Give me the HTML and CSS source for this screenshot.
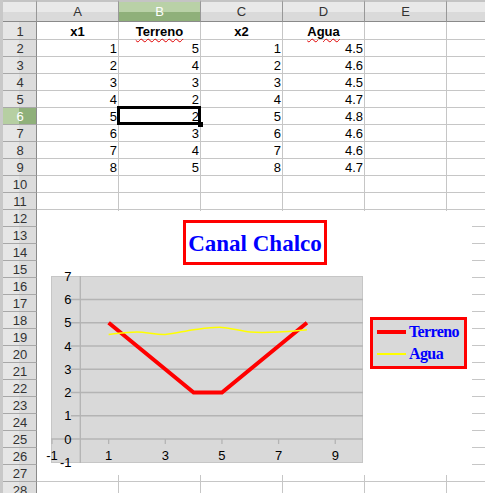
FILE: index.html
```html
<!DOCTYPE html>
<html lang="es">
<head>
    <meta charset="UTF-8">
    <title>Canal Chalco - Hoja1</title>
    <link rel="stylesheet" href="styles.css">
</head>
<body>

<div class="sheet">
    <div class="row head">
        <div class="corner"></div>
        <div class="col">A</div>
        <div class="col active">B</div>
        <div class="col">C</div>
        <div class="col">D</div>
        <div class="col">E</div>
        <div class="col"></div>
    </div>
    <div class="row first">
        <div class="num">1</div>
        <div class="cell label">x1</div>
        <div class="cell label"><span class="typo">Terreno</span></div>
        <div class="cell label">x2</div>
        <div class="cell label"><span class="typo">Agua</span></div>
        <div class="cell"></div>
        <div class="cell"></div>
    </div>
    <div class="row"><div class="num">2</div><div class="cell">1</div><div class="cell">5</div><div class="cell">1</div><div class="cell">4.5</div><div class="cell"></div><div class="cell"></div></div>
    <div class="row"><div class="num">3</div><div class="cell">2</div><div class="cell">4</div><div class="cell">2</div><div class="cell">4.6</div><div class="cell"></div><div class="cell"></div></div>
    <div class="row"><div class="num">4</div><div class="cell">3</div><div class="cell">3</div><div class="cell">3</div><div class="cell">4.5</div><div class="cell"></div><div class="cell"></div></div>
    <div class="row"><div class="num">5</div><div class="cell">4</div><div class="cell">2</div><div class="cell">4</div><div class="cell">4.7</div><div class="cell"></div><div class="cell"></div></div>
    <div class="row"><div class="num active">6</div><div class="cell">5</div><div class="cell cursor">2</div><div class="cell">5</div><div class="cell">4.8</div><div class="cell"></div><div class="cell"></div></div>
    <div class="row"><div class="num">7</div><div class="cell">6</div><div class="cell">3</div><div class="cell">6</div><div class="cell">4.6</div><div class="cell"></div><div class="cell"></div></div>
    <div class="row"><div class="num">8</div><div class="cell">7</div><div class="cell">4</div><div class="cell">7</div><div class="cell">4.6</div><div class="cell"></div><div class="cell"></div></div>
    <div class="row"><div class="num">9</div><div class="cell">8</div><div class="cell">5</div><div class="cell">8</div><div class="cell">4.7</div><div class="cell"></div><div class="cell"></div></div>
    <div class="row"><div class="num">10</div><div class="cell"></div><div class="cell"></div><div class="cell"></div><div class="cell"></div><div class="cell"></div><div class="cell"></div></div>
    <div class="row"><div class="num">11</div><div class="cell"></div><div class="cell"></div><div class="cell"></div><div class="cell"></div><div class="cell"></div><div class="cell"></div></div>
    <div class="row"><div class="num">12</div><div class="cell"></div><div class="cell"></div><div class="cell"></div><div class="cell"></div><div class="cell"></div><div class="cell"></div></div>
    <div class="row"><div class="num">13</div><div class="cell"></div><div class="cell"></div><div class="cell"></div><div class="cell"></div><div class="cell"></div><div class="cell"></div></div>
    <div class="row"><div class="num">14</div><div class="cell"></div><div class="cell"></div><div class="cell"></div><div class="cell"></div><div class="cell"></div><div class="cell"></div></div>
    <div class="row"><div class="num">15</div><div class="cell"></div><div class="cell"></div><div class="cell"></div><div class="cell"></div><div class="cell"></div><div class="cell"></div></div>
    <div class="row"><div class="num">16</div><div class="cell"></div><div class="cell"></div><div class="cell"></div><div class="cell"></div><div class="cell"></div><div class="cell"></div></div>
    <div class="row"><div class="num">17</div><div class="cell"></div><div class="cell"></div><div class="cell"></div><div class="cell"></div><div class="cell"></div><div class="cell"></div></div>
    <div class="row"><div class="num">18</div><div class="cell"></div><div class="cell"></div><div class="cell"></div><div class="cell"></div><div class="cell"></div><div class="cell"></div></div>
    <div class="row"><div class="num">19</div><div class="cell"></div><div class="cell"></div><div class="cell"></div><div class="cell"></div><div class="cell"></div><div class="cell"></div></div>
    <div class="row"><div class="num">20</div><div class="cell"></div><div class="cell"></div><div class="cell"></div><div class="cell"></div><div class="cell"></div><div class="cell"></div></div>
    <div class="row"><div class="num">21</div><div class="cell"></div><div class="cell"></div><div class="cell"></div><div class="cell"></div><div class="cell"></div><div class="cell"></div></div>
    <div class="row"><div class="num">22</div><div class="cell"></div><div class="cell"></div><div class="cell"></div><div class="cell"></div><div class="cell"></div><div class="cell"></div></div>
    <div class="row"><div class="num">23</div><div class="cell"></div><div class="cell"></div><div class="cell"></div><div class="cell"></div><div class="cell"></div><div class="cell"></div></div>
    <div class="row"><div class="num">24</div><div class="cell"></div><div class="cell"></div><div class="cell"></div><div class="cell"></div><div class="cell"></div><div class="cell"></div></div>
    <div class="row"><div class="num">25</div><div class="cell"></div><div class="cell"></div><div class="cell"></div><div class="cell"></div><div class="cell"></div><div class="cell"></div></div>
    <div class="row"><div class="num">26</div><div class="cell"></div><div class="cell"></div><div class="cell"></div><div class="cell"></div><div class="cell"></div><div class="cell"></div></div>
    <div class="row"><div class="num">27</div><div class="cell"></div><div class="cell"></div><div class="cell"></div><div class="cell"></div><div class="cell"></div><div class="cell"></div></div>
    <div class="row"><div class="num">28</div><div class="cell"></div><div class="cell"></div><div class="cell"></div><div class="cell"></div><div class="cell"></div><div class="cell"></div></div>

    <!-- chart object floating over rows 12-27 -->
    <div class="chart">
        <svg class="plot" width="435" height="264" viewBox="0 0 435 264">
            <rect class="wall" x="14.5" y="65.5" width="311" height="186"/>
            <g class="grid">
                <line x1="34" y1="204.75" x2="326" y2="204.75"/>
                <line x1="34" y1="181.5" x2="326" y2="181.5"/>
                <line x1="34" y1="158.25" x2="326" y2="158.25"/>
                <line x1="34" y1="135" x2="326" y2="135"/>
                <line x1="34" y1="111.75" x2="326" y2="111.75"/>
                <line x1="34" y1="88.5" x2="326" y2="88.5"/>
                <line x1="14" y1="228" x2="326" y2="228"/>
                <line x1="43.3" y1="65" x2="43.3" y2="252"/>
            </g>
            <g class="ticks">
                <line x1="14.97" y1="228" x2="14.97" y2="233"/>
                <line x1="71.63" y1="228" x2="71.63" y2="233"/>
                <line x1="128.29" y1="228" x2="128.29" y2="233"/>
                <line x1="184.95" y1="228" x2="184.95" y2="233"/>
                <line x1="241.61" y1="228" x2="241.61" y2="233"/>
                <line x1="298.27" y1="228" x2="298.27" y2="233"/>
            </g>
            <g class="axis-label y-labels">
                <text x="34.5" y="69.95">7</text>
                <text x="34.5" y="93.2">6</text>
                <text x="34.5" y="116.45">5</text>
                <text x="34.5" y="139.7">4</text>
                <text x="34.5" y="162.95">3</text>
                <text x="34.5" y="186.2">2</text>
                <text x="34.5" y="209.45">1</text>
                <text x="34.5" y="232.7">0</text>
                <text x="34.5" y="255.95">-1</text>
            </g>
            <g class="axis-label x-labels">
                <text x="14.97" y="249">-1</text>
                <text x="71.63" y="249">1</text>
                <text x="128.29" y="249">3</text>
                <text x="184.95" y="249">5</text>
                <text x="241.61" y="249">7</text>
                <text x="298.27" y="249">9</text>
            </g>
            <polyline class="terreno" points="71.63,111.75 99.96,135 128.29,158.25 156.62,181.5 184.95,181.5 213.28,158.25 241.61,135 269.94,111.75"/>
            <path class="agua" d="M71.63 123.4 C76.35 123.01 90.52 121.05 99.96 121.05 C109.4 121.05 118.85 123.79 128.29 123.4 C137.73 123.01 147.18 119.87 156.62 118.7 C166.06 117.53 175.51 116.01 184.95 116.4 C194.39 116.79 203.84 120.27 213.28 121.05 C222.72 121.83 232.17 121.44 241.61 121.05 C251.05 120.66 265.22 119.09 269.94 118.7"/>
        </svg>

        <div class="chart-title">Canal Chalco</div>

        <div class="legend">
            <div class="legend-item"><span class="swatch"></span>Terreno</div>
            <div class="legend-item"><span class="swatch agua"></span>Agua</div>
        </div>
    </div>
</div>

</body>
</html>
```

FILE: styles.css
```css
/* spreadsheet view with an embedded line chart */
html, body {
    margin: 0;
    padding: 0;
    overflow: hidden;
    background-color: #fff;
}
body {
    font-family: "Liberation Sans", Arial, sans-serif;
    font-size: 13px;
    color: #000;
}
.sheet {
    position: relative;
    border-left: 3px solid #c8c8c8;
}
.row {
    display: grid;
    grid-template-columns: 34px repeat(5, 82px) 1fr;
    height: 17px;
}
.row.head {
    height: 22px;
}
.row.first {
    height: 18px;
}
.row > div {
    box-sizing: border-box;
}
.row > div:last-child {
    border-right: 0;
}

/* column and row headers */
.corner, .col {
    border-top: 2px solid #c4c4c4;
    border-right: 1px solid #989898;
    border-bottom: 1px solid #8a8a8a;
    background: linear-gradient(#e9e9e9 55%, #dadada 55%);
    color: #333;
    text-align: center;
    line-height: 18px;
    padding-top: 1px;
}
.col.active {
    background: linear-gradient(#b9d1a7 55%, #8fb07a 55%);
    color: #fff;
}
.num {
    border-right: 1px solid #8a8a8a;
    border-bottom: 1px solid #a8a8a8;
    background: linear-gradient(to right, #e6e6e6 50%, #dcdcdc 50%);
    color: #333;
    display: flex;
    align-items: flex-end;
    justify-content: center;
    line-height: 14px;
    padding-left: 1px;
}
.num.active {
    background: linear-gradient(to right, #b6cfa2 50%, #8fb07a 50%);
    color: #fff;
}

/* cells */
.cell {
    border-right: 1px solid #c6c6c6;
    border-bottom: 1px solid #c6c6c6;
    display: flex;
    align-items: flex-end;
    justify-content: flex-end;
    line-height: 14px;
    padding-right: 1px;
    white-space: nowrap;
}
.cell.label {
    justify-content: center;
    font-weight: bold;
    padding-right: 0;
}
.typo {
    text-decoration: underline wavy #e00000;
    text-decoration-thickness: 1px;
    text-underline-offset: 2px;
}
.cell.cursor {
    position: relative;
}
.cell.cursor::after {
    content: "";
    position: absolute;
    top: -2px;
    left: -2px;
    right: -1px;
    bottom: -1px;
    border: 3px solid #000;
}
.cell.cursor::before {
    content: "";
    position: absolute;
    right: -3px;
    bottom: -3px;
    width: 5px;
    height: 5px;
    background-color: #000;
    z-index: 1;
}

/* chart */
.chart {
    position: absolute;
    left: 34px;
    top: 211px;
    width: 435px;
    height: 264px;
    background-color: #fff;
}
.plot {
    display: block;
}
.wall {
    fill: #d9d9d9;
    stroke: #c6c6c6;
    stroke-width: 1;
}
.grid line {
    stroke: #b4b4b4;
    stroke-width: 1.3;
}
.ticks line {
    stroke: #b4b4b4;
    stroke-width: 1.3;
}
.axis-label text {
    font-family: "Liberation Sans", Arial, sans-serif;
    font-size: 13px;
    fill: #000;
}
.y-labels text {
    text-anchor: end;
}
.x-labels text {
    text-anchor: middle;
}
.terreno {
    fill: none;
    stroke: #ff0000;
    stroke-width: 4;
    stroke-linejoin: miter;
}
.agua {
    fill: none;
    stroke: #ffff00;
    stroke-width: 1.5;
}
.chart-title {
    position: absolute;
    left: 146px;
    top: 9px;
    width: 144px;
    height: 45px;
    box-sizing: border-box;
    border: 3px solid #ff0000;
    background-color: #fff;
    color: #0000ff;
    font-family: "Liberation Serif", "Times New Roman", serif;
    font-weight: bold;
    font-size: 23px;
    line-height: 41px;
    text-align: center;
    white-space: nowrap;
}
.legend {
    position: absolute;
    left: 333px;
    top: 106px;
    width: 97px;
    height: 52px;
    box-sizing: border-box;
    border: 3px solid #ff0000;
    background-color: #d9d9d9;
    padding-top: 1px;
}
.legend-item {
    display: flex;
    align-items: center;
    gap: 3px;
    height: 22px;
    padding-left: 4px;
    color: #0000ff;
    font-family: "Liberation Serif", "Times New Roman", serif;
    font-weight: bold;
    font-size: 16px;
    letter-spacing: -0.6px;
    white-space: nowrap;
}
.swatch {
    display: block;
    width: 29px;
    height: 4px;
    background-color: #ff0000;
}
.swatch.agua {
    height: 2px;
    background-color: #ffff00;
}
```
